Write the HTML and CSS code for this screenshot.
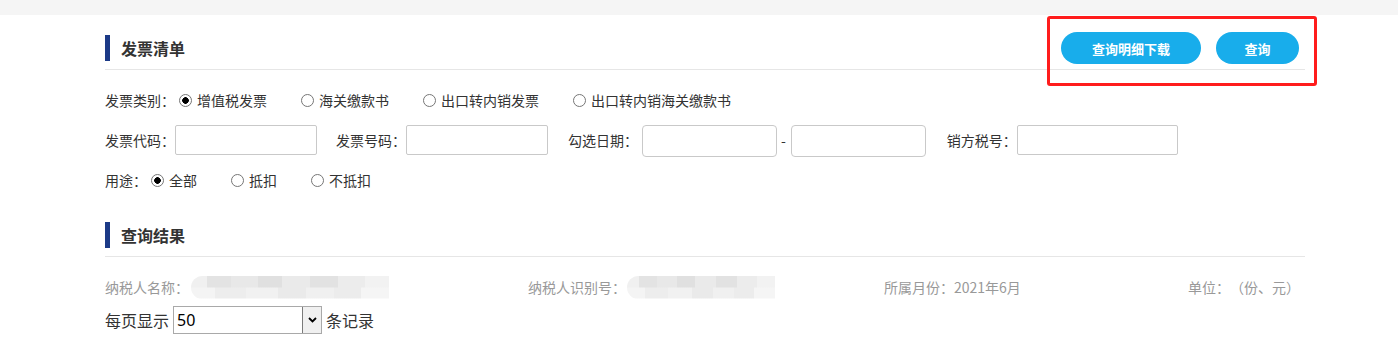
FILE: index.html
```html
<!DOCTYPE html>
<html lang="zh-CN">
<head>
    <meta charset="UTF-8">
    <meta name="viewport" content="width=device-width, initial-scale=1.0">
    <title>发票清单</title>
    <link rel="stylesheet" href="styles.css">
</head>
<body>
    <div class="topbar"></div>
    <div class="page">
        <div class="section-head">
            <h2 class="section-title">发票清单</h2>
            <div class="actions">
                <button class="btn btn-wide">查询明细下载</button>
                <button class="btn btn-narrow">查询</button>
            </div>
        </div>

        <div class="filter">
            <div class="filter-row">
                <span class="field-label">发票类别：</span>
                <label class="radio-item"><input type="radio" name="type" checked>增值税发票</label>
                <label class="radio-item"><input type="radio" name="type">海关缴款书</label>
                <label class="radio-item"><input type="radio" name="type">出口转内销发票</label>
                <label class="radio-item"><input type="radio" name="type">出口转内销海关缴款书</label>
            </div>
            <div class="filter-row">
                <span class="field-label">发票代码：</span>
                <input class="text-input input-code" type="text">
                <span class="field-label">发票号码：</span>
                <input class="text-input input-number" type="text">
                <span class="field-label">勾选日期：</span>
                <input class="text-input input-date date-from" type="text">
                <span class="dash">-</span>
                <input class="text-input input-date date-to" type="text">
                <span class="field-label">销方税号：</span>
                <input class="text-input input-tax" type="text">
            </div>
            <div class="filter-row">
                <span class="field-label">用途：</span>
                <label class="radio-item"><input type="radio" name="use" checked>全部</label>
                <label class="radio-item"><input type="radio" name="use">抵扣</label>
                <label class="radio-item"><input type="radio" name="use">不抵扣</label>
            </div>
        </div>

        <div class="section-head result-head">
            <h2 class="section-title">查询结果</h2>
        </div>

        <div class="info-row">
            <div class="info-item">纳税人名称：<span class="masked masked-name"></span></div>
            <div class="info-item">纳税人识别号：<span class="masked masked-id"></span></div>
            <div class="info-item">所属月份：2021年6月</div>
            <div class="info-item info-unit">单位：（份、元）</div>
        </div>

        <div class="page-size-row">
            每页显示
            <span class="page-size">
                <select>
                    <option>50</option>
                    <option>100</option>
                </select>
                <span class="select-arrow">
                    <svg width="9" height="6" viewBox="0 0 9 6"><path d="M1 1l3.5 3.5L8 1" fill="none" stroke="#000" stroke-width="1.8"/></svg>
                </span>
            </span>
            条记录
        </div>
    </div>
</body>
</html>
```

FILE: styles.css
```css
:root {
    --text-color: #333;
    --muted-color: #999;
    --title-bar: #1c3a87;
    --line-color: #e6e6e6;
    --btn-bg: #18adeb;
    --input-border: #c9c9c9;
}

body {
    margin: 0;
    font-family: "Noto Sans CJK SC", "Noto Sans", sans-serif;
    font-size: 14px;
    color: var(--text-color);
    background: #fff;
    text-spacing-trim: space-all;
}

.topbar {
    height: 15px;
    background: #f5f5f5;
}

.page {
    width: 1200px;
    margin-left: 105px;
}

/* 区块标题 */
.section-head {
    display: flex;
    align-items: center;
    justify-content: space-between;
    min-height: 32px;
    padding: 17px 0 5px;
    border-bottom: 1px solid var(--line-color);
}

.section-title {
    margin: 0;
    padding-left: 11px;
    border-left: 5px solid var(--title-bar);
    height: 26px;
    line-height: 26px;
    font-size: 16px;
    font-weight: bold;
}

.actions {
    position: relative;
    display: flex;
    gap: 15px;
    margin-right: 6px;
}

.actions::after {
    content: "";
    position: absolute;
    left: -14px;
    right: -18px;
    top: -16px;
    bottom: -22px;
    border: 3px solid #ff1c1c;
    border-radius: 3px;
    pointer-events: none;
}

.btn {
    height: 32px;
    border: none;
    border-radius: 16px;
    background: var(--btn-bg);
    color: #fff;
    font-family: inherit;
    font-size: 13px;
    font-weight: bold;
    padding: 0;
}

.btn-wide {
    width: 140px;
}

.btn-narrow {
    width: 83px;
}

/* 查询条件 */
.filter {
    margin-top: 15px;
    display: flex;
    flex-direction: column;
    gap: 10px;
}

.filter-row {
    display: flex;
    align-items: center;
    height: 30px;
    white-space: nowrap;
}

.radio-item {
    display: inline-flex;
    align-items: center;
    margin-right: 30px;
}

.radio-item input {
    appearance: none;
    width: 13px;
    height: 13px;
    margin: 0 5px 0 4px;
    border: 1px solid #767676;
    border-radius: 50%;
    background: #fff;
}

.radio-item input:checked {
    background: radial-gradient(circle, #000 0 3px, #fff 3.6px);
}

.text-input {
    box-sizing: border-box;
    height: 30px;
    border: 1px solid var(--input-border);
    border-radius: 2px;
    font-family: inherit;
    font-size: 14px;
    padding: 0 4px;
}

.input-code {
    width: 142px;
    margin-right: 19px;
}

.input-number {
    width: 142px;
    margin-right: 20px;
}

.input-date {
    width: 135px;
    height: 32px;
    border-radius: 4px;
    margin-top: 2px;
}

.date-from {
    margin-left: 4px;
}

.date-to {
    margin-right: 21px;
}

.dash {
    margin: 0 5px 0 4px;
}

.input-tax {
    width: 161px;
}

/* 查询结果 */
.result-head {
    margin-top: 7px;
}

.info-row {
    display: grid;
    grid-template-columns: 423px 356px 1fr auto;
    align-items: center;
    height: 24px;
    margin-top: 18px;
    padding-right: 5px;
    color: var(--muted-color);
}

.info-item {
    display: flex;
    align-items: center;
    white-space: nowrap;
}

.masked {
    display: inline-block;
    height: 23px;
    border-radius: 12px 0 0 12px;
    background:
        linear-gradient(90deg, #f0f0f0 0 8%, #e3e3e3 8% 20%, #e8e8e8 20% 34%, #e0e0e0 34% 46%, #eaeaea 46% 60%, #e2e2e2 60% 74%, #ececec 74% 88%, #f2f2f2 88%) top / 100% 50% no-repeat,
        linear-gradient(90deg, #f4f4f4 0 12%, #ededed 12% 28%, #f1f1f1 28% 44%, #eaeaea 44% 58%, #f0f0f0 58% 72%, #ececec 72% 86%, #f5f5f5 86%) bottom / 100% 50% no-repeat;
    filter: blur(0.6px);
}

.masked-name {
    width: 198px;
    margin-left: 2px;
}

.masked-id {
    width: 148px;
    margin-left: 1px;
}

.page-size-row {
    display: flex;
    align-items: center;
    gap: 4px;
    margin-top: 7px;
    font-size: 16px;
}

.page-size {
    position: relative;
    display: inline-block;
    width: 149px;
    height: 28px;
    box-sizing: border-box;
    border: 1px solid #a9a9a9;
}

.page-size select {
    appearance: none;
    width: 100%;
    height: 100%;
    border: none;
    outline: none;
    background: #fff;
    font-family: "Noto Sans", sans-serif;
    font-size: 16px;
    color: #000;
    padding: 0 0 0 3px;
}

.select-arrow {
    position: absolute;
    top: 0;
    right: 0;
    bottom: 0;
    width: 18px;
    display: flex;
    align-items: center;
    justify-content: center;
    background: #f0f0f0;
    border-left: 1px solid #7a7a7a;
}
```
